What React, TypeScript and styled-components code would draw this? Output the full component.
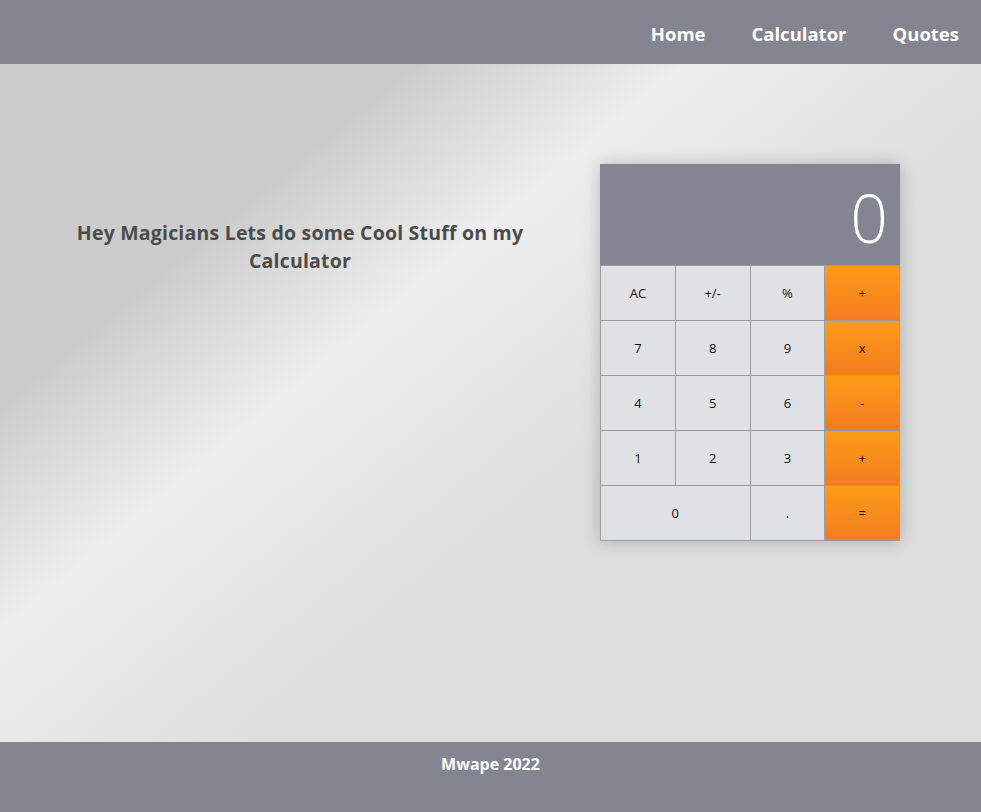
import React from "react";
import styled, { createGlobalStyle } from "styled-components";

const GlobalStyle = createGlobalStyle`
  * { box-sizing: border-box; }
  html, body { margin: 0; padding: 0; }
  body {
    font-family: "Comic Sans MS", "Open Sans", sans-serif;
  }
`;

const Page = styled.div`
  min-height: 812px;
  display: flex;
  flex-direction: column;
  background: linear-gradient(to bottom right, #cccccc 0%, #cccccc 25%, #eeeeee 39%, #dddddd 60%, #dddddd 100%);
`;

const Header = styled.header`
  height: 64px;
  background: #848591;
  display: flex;
  justify-content: flex-end;
  align-items: center;
  padding: 3px 22px 0 0;
`;

const Nav = styled.nav`
  display: flex;
  gap: 46px;
`;

const NavLink = styled.a`
  color: #ffffff;
  font-weight: 700;
  font-size: 18.5px;
  text-decoration: none;
`;

const Main = styled.main`
  flex: 1;
  display: flex;
  align-items: flex-start;
  padding-top: 100px;
`;

const Intro = styled.section`
  width: 600px;
  padding: 55px 60px 0;
  display: flex;
  justify-content: center;
`;

const Heading = styled.h2`
  margin: 0;
  font-size: 19.5px;
  line-height: 28px;
  font-weight: 700;
  color: #4b4b4b;
  text-align: center;
  letter-spacing: 0.2px;
`;

const Calc = styled.div`
  width: 300px;
  box-shadow: 0 0 16px rgba(0, 0, 0, 0.22);
  display: flex;
  flex-direction: column;
`;

const Display = styled.div`
  height: 101px;
  background: #848592;
  display: flex;
  justify-content: flex-end;
  align-items: center;
  padding: 4px 12px 0;
  color: #ffffff;
  font-family: "Open Sans", sans-serif;
  font-size: 66px;
  font-weight: 300;
`;

const Keys = styled.div`
  display: grid;
  grid-template-columns: repeat(4, 1fr);
  grid-auto-rows: 54px;
  gap: 1px;
  padding: 1px;
  background: #9c9ca0;
`;

const Key = styled.button<{ $op?: boolean; $wide?: boolean }>`
  border: none;
  margin: 0;
  padding: 0;
  font-family: "Comic Sans MS", "Open Sans", sans-serif;
  font-size: 13px;
  color: #111111;
  grid-column: ${(p) => (p.$wide ? "span 2" : "auto")};
  background: ${(p) =>
    p.$op ? "linear-gradient(to bottom, #fb9b17, #f47c21)" : "#e0e1e5"};
  cursor: pointer;
`;

const Footer = styled.footer`
  height: 70px;
  background: #848591;
  display: flex;
  justify-content: center;
  padding-top: 11px;
`;

const FooterText = styled.p`
  margin: 0;
  color: #ffffff;
  font-weight: 700;
  font-size: 16px;
  line-height: 22px;
`;

const keys: { label: string; op?: boolean; wide?: boolean }[] = [
  { label: "AC" },
  { label: "+/-" },
  { label: "%" },
  { label: "÷", op: true },
  { label: "7" },
  { label: "8" },
  { label: "9" },
  { label: "x", op: true },
  { label: "4" },
  { label: "5" },
  { label: "6" },
  { label: "-", op: true },
  { label: "1" },
  { label: "2" },
  { label: "3" },
  { label: "+", op: true },
  { label: "0", wide: true },
  { label: "." },
  { label: "=", op: true },
];

export default function App() {
  return (
    <>
      <GlobalStyle />
      <Page>
        <Header>
          <Nav>
            <NavLink href="#">Home</NavLink>
            <NavLink href="#">Calculator</NavLink>
            <NavLink href="#">Quotes</NavLink>
          </Nav>
        </Header>
        <Main>
          <Intro>
            <Heading>
              Hey Magicians Lets do some Cool Stuff on my
              <br />
              Calculator
            </Heading>
          </Intro>
          <Calc>
            <Display>0</Display>
            <Keys>
              {keys.map((k) => (
                <Key key={k.label} $op={k.op} $wide={k.wide}>
                  {k.label}
                </Key>
              ))}
            </Keys>
          </Calc>
        </Main>
        <Footer>
          <FooterText>Mwape 2022</FooterText>
        </Footer>
      </Page>
    </>
  );
}
